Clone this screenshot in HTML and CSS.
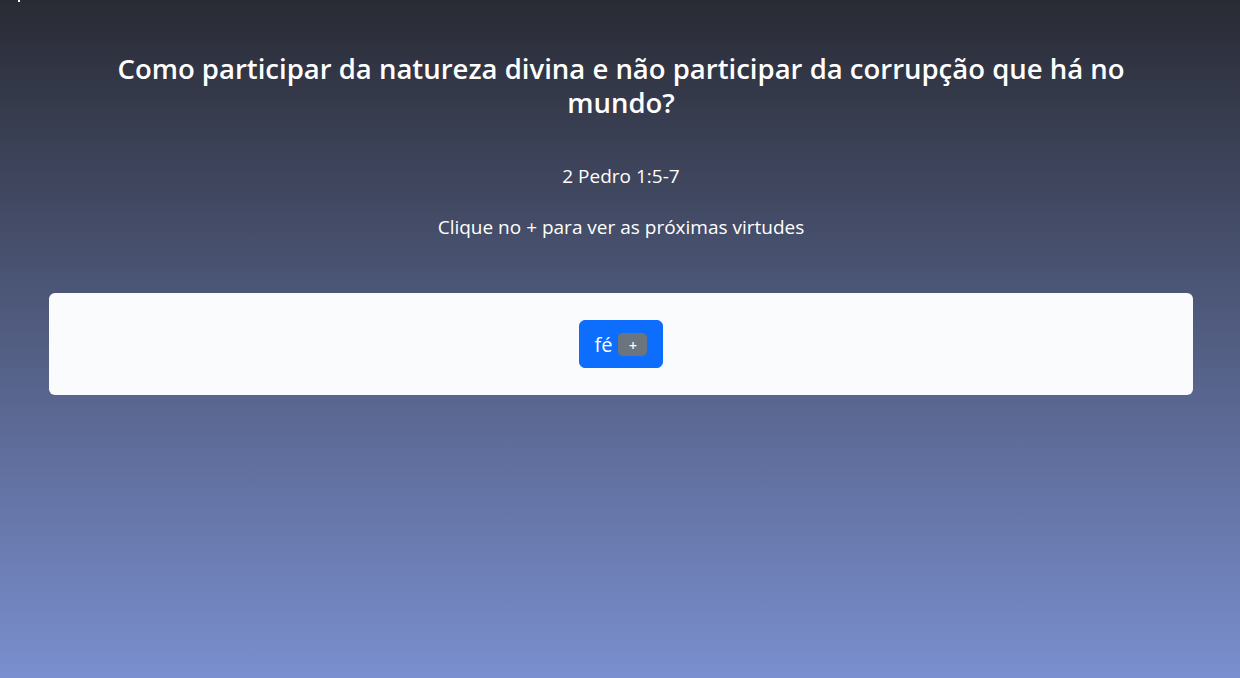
FILE: index.html
```html
<!DOCTYPE html>
<html lang="pt-BR">
<head>
<meta charset="utf-8">
<title>Virtudes</title>
<link rel="stylesheet" href="styles.css">
</head>
<body>
<span class="dot"></span>
<main class="container">
  <h1 class="title">Como participar da natureza divina e não participar da corrupção que há no mundo?</h1>
  <p class="ref">2 Pedro 1:5-7</p>
  <p class="hint">Clique no + para ver as próximas virtudes</p>
  <section class="card">
    <button class="btn" type="button">fé <span class="badge">+</span></button>
  </section>
</main>
</body>
</html>
```
FILE: styles.css
```css
html, body {
  margin: 0;
  height: 100%;
}
body {
  background: linear-gradient(to bottom, #292b34 0%, #7a8fcf 100%);
  font-family: "Open Sans", "Noto Sans", sans-serif;
  color: #fff;
  position: relative;
}
.dot {
  position: absolute;
  left: 18px;
  top: 0;
  width: 2px;
  height: 2px;
  background: #fff;
}
.container {
  width: 1144px;
  margin: 0 47px 0 49px;
  padding-top: 52px;
  display: flex;
  flex-direction: column;
  align-items: center;
}
.title {
  margin: 0;
  max-width: 1060px;
  font-size: 27.5px;
  line-height: 33.6px;
  font-weight: 600;
  text-align: center;
}
.ref {
  margin: 44px 0 0;
  font-size: 19px;
  line-height: 27px;
}
.hint {
  margin: 24px 0 0;
  font-size: 19px;
  line-height: 27px;
}
.card {
  align-self: stretch;
  margin-top: 52px;
  height: 102px;
  background: #fafbfc;
  border-radius: 6px;
  display: flex;
  align-items: center;
  justify-content: center;
}
.btn {
  display: inline-flex;
  align-items: center;
  gap: 6px;
  height: 48px;
  padding: 0 15px;
  border: 1px solid #0d6efd;
  border-radius: 6px;
  background: #0d6efd;
  color: #fff;
  font-family: inherit;
  font-size: 20px;
  cursor: pointer;
}
.badge {
  display: inline-flex;
  align-items: center;
  justify-content: center;
  width: 29px;
  height: 23px;
  padding-top: 2px;
  box-sizing: border-box;
  border-radius: 5px;
  background: #6c757d;
  font-size: 14px;
  font-weight: 600;
}
```
